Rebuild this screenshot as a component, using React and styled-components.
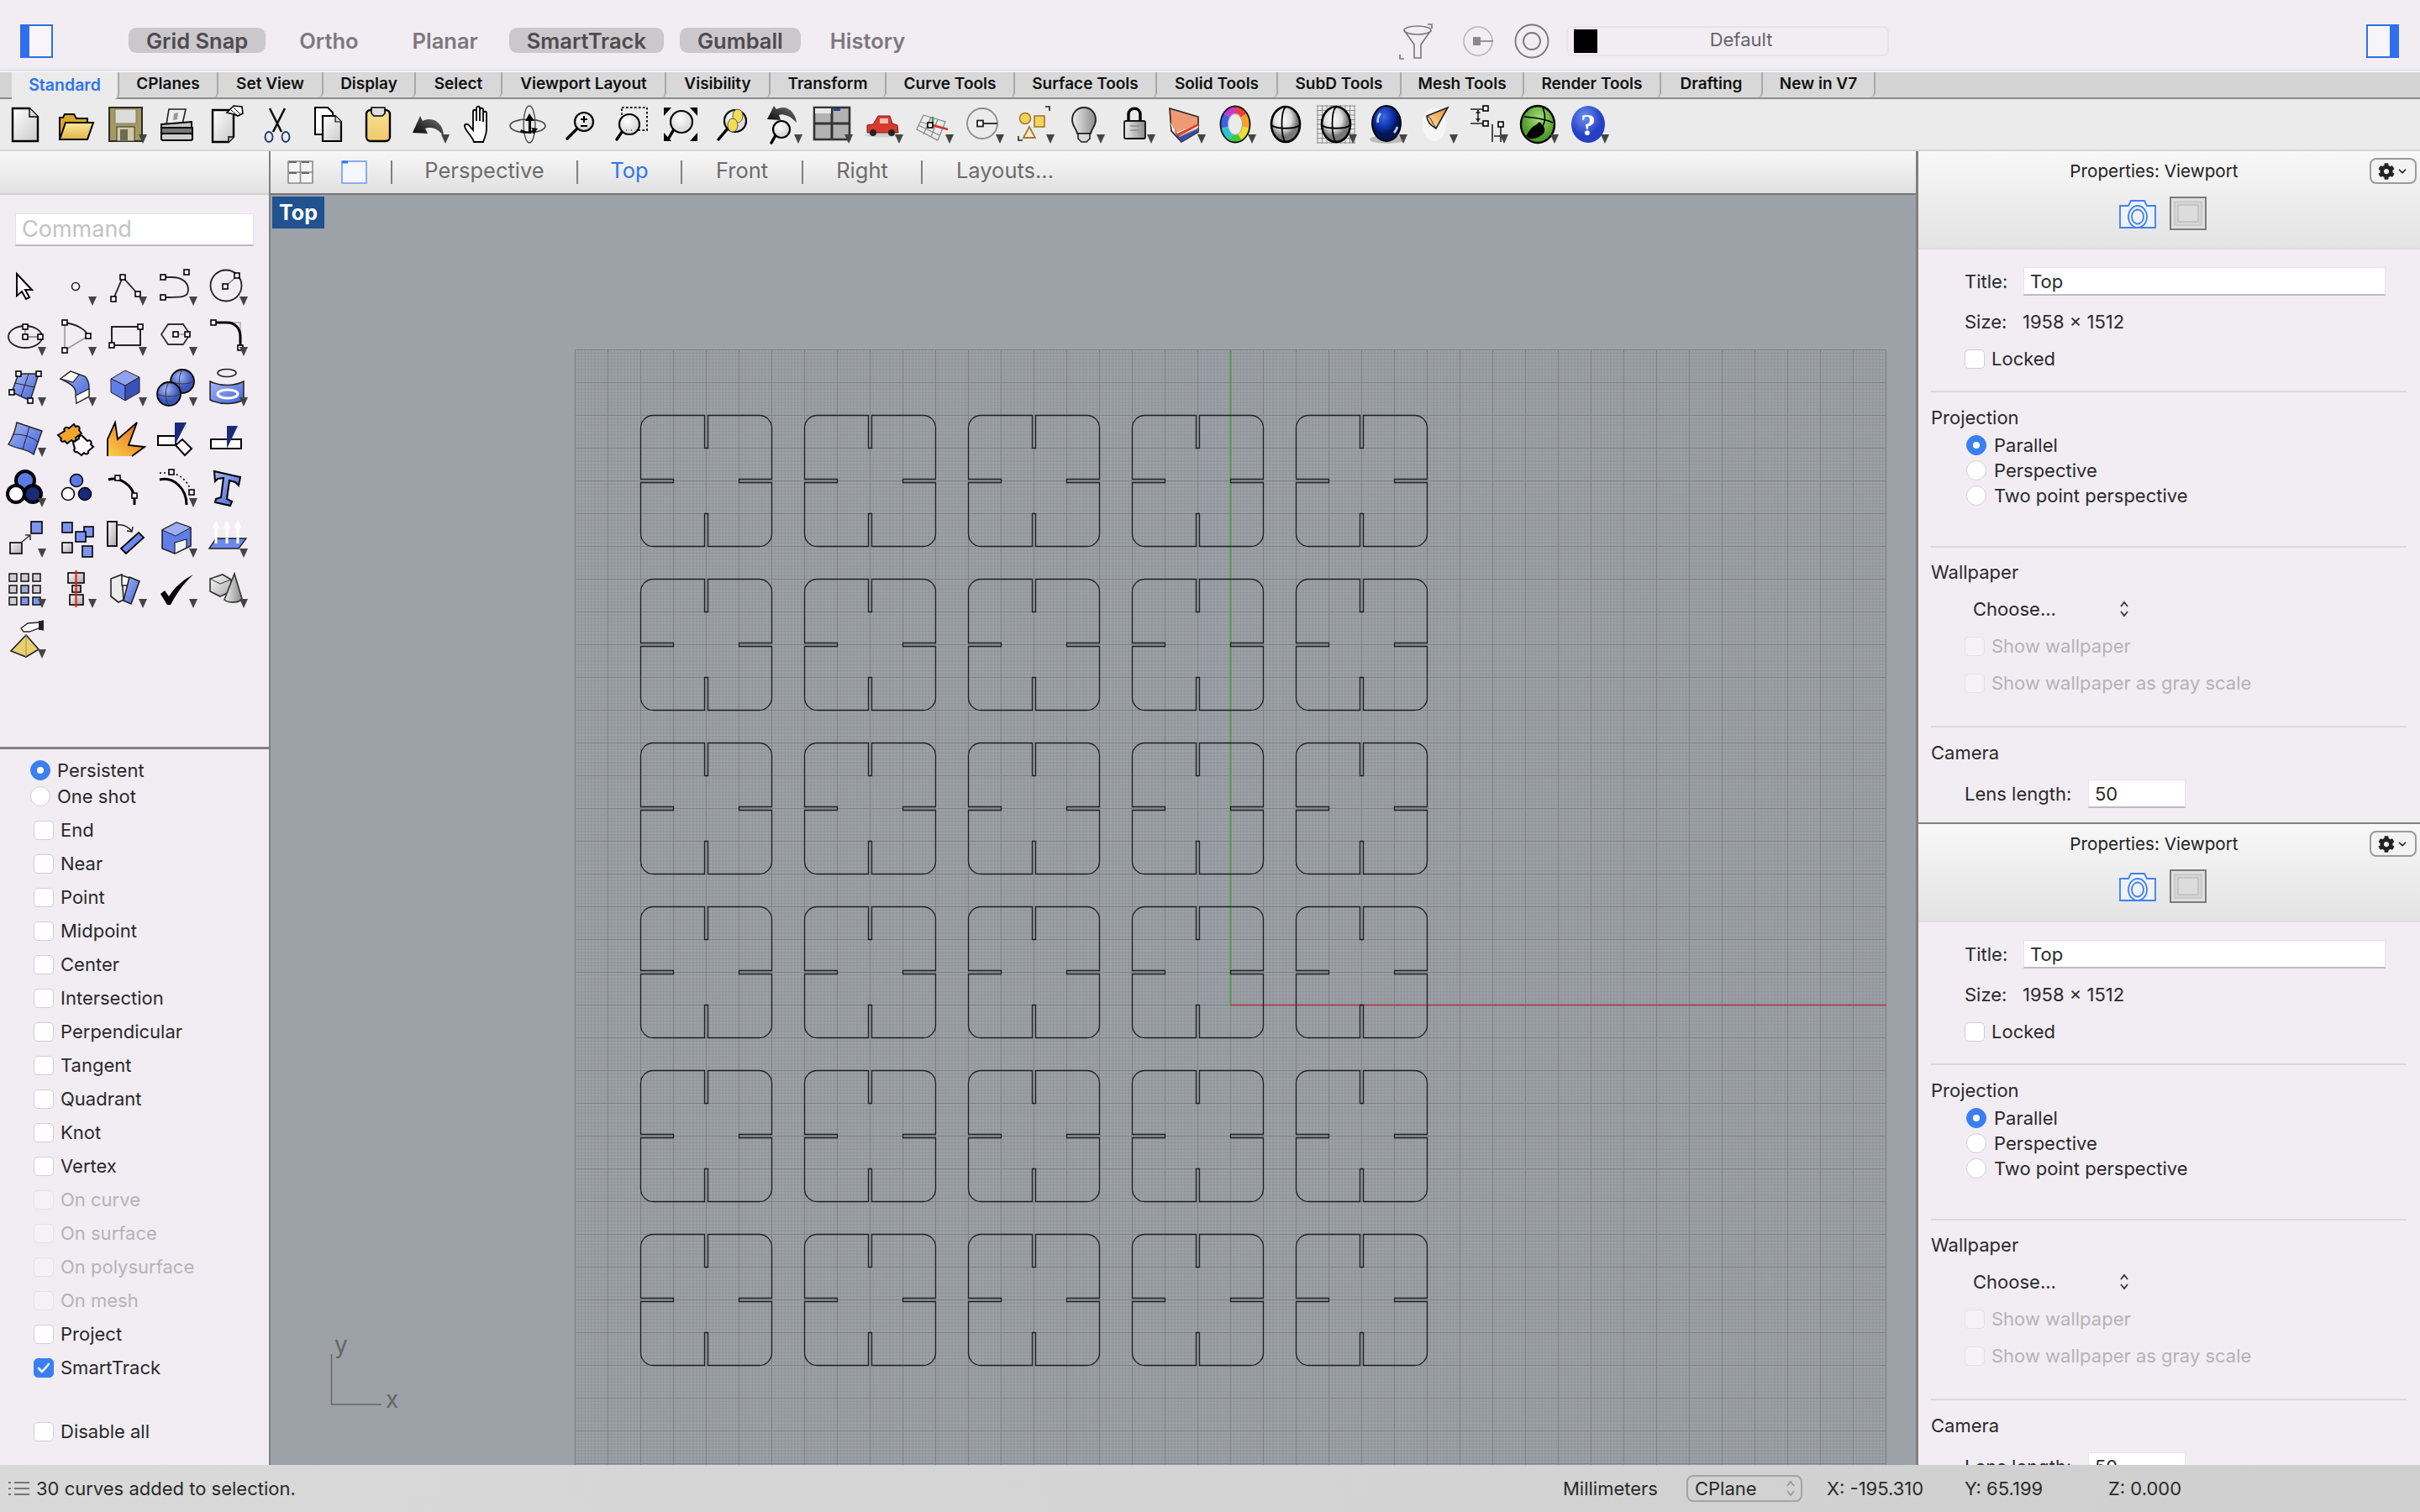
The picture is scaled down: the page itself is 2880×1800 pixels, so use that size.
import React from 'react';
import styled, { createGlobalStyle } from 'styled-components';
import { FaCog } from 'react-icons/fa';
import { ChevronDown } from 'lucide-react';

const GlobalStyle = createGlobalStyle`
  html, body {
    margin: 0;
    padding: 0;
    background: #f1edf3;
  }
  * {
    box-sizing: border-box;
  }
`;

const Page = styled.div`
  width: 2880px;
  height: 1800px;
  display: flex;
  flex-direction: column;
  overflow: hidden;
  background: #f1edf3;
  color: #2a2a2a;
  font-family: Inter, "Liberation Sans", sans-serif;
  font-size: 22px;
`;

/* ---- top bar ---- */
const TopBar = styled.div`
  height: 84px;
  flex: none;
  display: flex;
  align-items: center;
  padding: 0 25px 0 24px;
`;

const PanelToggle = styled.svg`
  width: 39px;
  height: 40px;
  flex: none;
  margin-left: ${p => (p.$right ? 'auto' : '0')};
  margin-top: 13px;
`;

const PillGroup = styled.div`
  width: 1602px;
  flex: none;
  padding-left: 90px;
  display: flex;
  align-items: center;
  gap: 19px;
`;

const Pill = styled.div`
  height: 30px;
  margin-top: 12px;
  margin-left: ${p => p.$shift || 0}px;
  padding: 0 21px;
  border-radius: 9px;
  display: flex;
  align-items: center;
  font-size: 25.5px;
  font-weight: 600;
  color: ${p => (p.$on ? '#4f4b50' : '#7d787e')};
  background: ${p => (p.$on ? '#cbc8cc' : 'transparent')};
`;

const FilterGroup = styled.div`
  display: flex;
  align-items: center;
  margin-top: 13px;
`;

const Glyph = styled.svg`
  flex: none;
  margin-right: ${p => p.$mr || 0}px;
`;

const LayerBox = styled.div`
  width: 384px;
  height: 36px;
  margin-left: 20px;
  padding: 4px 7px;
  display: flex;
  align-items: center;
  border: 2px solid #e8e4ea;
  border-radius: 8px;
`;

const Swatch = styled.div`
  width: 28px;
  height: 28px;
  background: #000;
`;

const LayerName = styled.div`
  flex: 1;
  text-align: center;
  color: #68646a;
  padding-left: 4px;
  padding-bottom: 4px;
`;

/* ---- tabs ---- */
const TabBar = styled.div`
  height: 34px;
  flex: none;
  display: flex;
  padding-left: 14px;
  background: #d4d4d4;
  border-top: 2px solid #f4f2f5;
  border-bottom: 2px solid #8d8d8d;
  box-shadow: 0 -1px 0 #d6d4d7;
`;

const Tab = styled.div`
  width: ${p => p.$w}px;
  height: ${p => (p.$active ? '32px' : '30px')};
  flex: none;
  display: flex;
  align-items: center;
  justify-content: center;
  padding-bottom: 3px;
  font-size: ${p => (p.$active ? '19.5px' : '19px')};
  font-weight: 600;
  color: ${p => (p.$active ? '#2f74ea' : '#111')};
  background: ${p => (p.$active ? '#ebebeb' : '#d8d8d8')};
  border-right: 2px solid #a9a9a9;
  border-bottom-right-radius: 6px;
  position: relative;
  z-index: ${p => (p.$active ? 1 : 0)};
`;

/* ---- toolbars ---- */
const ToolRow = styled.div`
  height: 62px;
  flex: none;
  display: flex;
  background: #ebebeb;
  border-bottom: 2px solid #d8d5db;
`;

const Slot = styled.div`
  width: 60px;
  height: 60px;
  flex: none;
  position: relative;
  display: flex;
  align-items: center;
  justify-content: center;
`;

const ToolSvg = styled.svg`
  width: 48px;
  height: 48px;
`;

const Caret = styled.div`
  position: absolute;
  right: 5px;
  bottom: 7px;
  width: 0;
  height: 0;
  border-left: 5.5px solid transparent;
  border-right: 5.5px solid transparent;
  border-top: 11px solid #444;
`;

/* ---- main area ---- */
const Main = styled.div`
  flex: 1;
  min-height: 0;
  display: flex;
`;

const LeftPanel = styled.div`
  width: 322px;
  flex: none;
  display: flex;
  flex-direction: column;
  border-right: 2px solid #808080;
`;

const LeftHeader = styled.div`
  height: 52px;
  flex: none;
  background: linear-gradient(#f8f8f8, #e2e2e2);
  border-bottom: 2px solid #d0d0d0;
`;

const CommandArea = styled.div`
  height: 660px;
  flex: none;
  padding-top: 22px;
  border-bottom: 3px solid #808080;
`;

const CommandInput = styled.div`
  width: 284px;
  height: 39px;
  margin-left: 18px;
  padding-left: 7px;
  background: #fff;
  border: 1px solid #e6e3e8;
  border-bottom: 2px solid #bdbbbf;
  color: #c3c3c3;
  font-size: 27px;
  line-height: 35px;
`;

const Palette = styled.div`
  display: grid;
  grid-template-columns: repeat(5, 60px);
  grid-auto-rows: 60px;
  margin-top: 18px;
`;

const SnapList = styled.div`
  padding-top: 9px;
  display: flex;
  flex-direction: column;
`;

const RadioGroup = styled.div`
  margin-bottom: 5px;
`;

const RadioRow = styled.div`
  height: 31px;
  display: flex;
  align-items: center;
  gap: 8px;
  padding-left: 36px;
`;

const CheckRow = styled.div`
  height: 40px;
  display: flex;
  align-items: center;
  gap: 8px;
  padding-left: 40px;
  margin-top: ${p => p.$gap || 0}px;
  color: ${p => (p.$off ? '#b6b2b7' : '#2a2a2a')};
`;

const Radio = styled.span`
  width: 24px;
  height: 24px;
  flex: none;
  display: flex;
  align-items: center;
  justify-content: center;
  border-radius: 50%;
  background: ${p => (p.$on ? '#3b7ff0' : '#fff')};
  border: 1px solid ${p => (p.$on ? '#3b7ff0' : '#d4d1d5')};
  &::after {
    content: '';
    width: 8px;
    height: 8px;
    border-radius: 50%;
    background: ${p => (p.$on ? '#fff' : 'transparent')};
  }
`;

const Check = styled.span`
  width: 24px;
  height: 23px;
  flex: none;
  display: flex;
  align-items: center;
  justify-content: center;
  border-radius: 5px;
  background: ${p => (p.$on ? '#3b7ff0' : p.$off ? '#f5f2f6' : '#fff')};
  border: 1px solid ${p => (p.$on ? '#3b7ff0' : p.$off ? '#e5e2e7' : '#d1ced3')};
`;

/* ---- viewport ---- */
const Center = styled.div`
  width: 1958px;
  flex: none;
  display: flex;
  flex-direction: column;
`;

const ViewTabs = styled.div`
  height: 52px;
  flex: none;
  display: flex;
  align-items: center;
  padding-left: 20px;
  background: linear-gradient(#f8f8f8, #e0e0e0);
  border-bottom: 2px solid #767676;
`;

const ViewIcon = styled.svg`
  width: 31px;
  height: 28px;
  flex: none;
  margin-right: ${p => p.$mr}px;
`;

const ViewSep = styled.div`
  width: 2px;
  height: 28px;
  flex: none;
  background: #808080;
`;

const ViewTab = styled.div`
  width: ${p => p.$w}px;
  flex: none;
  text-align: center;
  padding-bottom: 6px;
  font-size: 25.5px;
  color: ${p => (p.$active ? '#2f74ea' : '#6c6c6c')};
`;

const Viewport = styled.div`
  flex: 1;
  min-height: 0;
  position: relative;
  background: #9da1a8;
  overflow: hidden;
`;

const ViewLabel = styled.div`
  position: absolute;
  left: 2px;
  top: 2px;
  width: 62px;
  height: 38px;
  background: #1f528f;
  color: #fff;
  font-size: 25px;
  font-weight: 700;
  display: flex;
  align-items: center;
  justify-content: center;
`;

const Canvas = styled.svg`
  display: block;
  width: 1958px;
  height: 1512px;
`;

/* ---- properties ---- */
const RightColumn = styled.div`
  width: 600px;
  flex: none;
  display: flex;
  flex-direction: column;
  border-left: 3px solid #808080;
  min-height: 0;
`;

const Props = styled.div`
  height: ${p => p.$h}px;
  flex: none;
  overflow: hidden;
  border-bottom: ${p => (p.$line ? '2px solid #808080' : 'none')};
`;

const PropsHeader = styled.div`
  height: 117px;
  position: relative;
  background: linear-gradient(#f8f8f8, #e3e3e3);
  border-bottom: 2px solid #dedbe0;
  display: flex;
  flex-direction: column;
  align-items: center;
  padding-top: 10px;
`;

const PropsTitle = styled.div`
  height: 28px;
  line-height: 28px;
  font-size: 20.7px;
  color: #222;
  margin-right: 36px;
`;

const GearButton = styled.div`
  position: absolute;
  right: 4px;
  top: 8px;
  width: 56px;
  height: 31px;
  border: 2px solid #9a9a9a;
  border-radius: 8px;
  background: #f3f3f3;
  display: flex;
  align-items: center;
  justify-content: center;
  gap: 2px;
  color: #222;
`;

const PropsIcons = styled.div`
  display: flex;
  align-items: center;
  gap: 16px;
  margin-top: 16px;
  margin-right: 16px;
`;

const HeaderIcon = styled.svg`
  width: 44px;
  height: 40px;
`;

const Section = styled.div`
  padding: ${p => p.$top}px 16px ${p => p.$bottom || 0}px 15px;
`;

const Divider = styled.div`
  height: 2px;
  margin: 0 16px 0 15px;
  background: #dcd8de;
`;

const Label = styled.div`
  height: 30px;
  line-height: 30px;
`;

const Row = styled.div`
  height: ${p => p.$h || 34}px;
  margin-top: ${p => p.$mt || 0}px;
  padding-left: ${p => p.$pl ?? 40}px;
  display: flex;
  align-items: center;
  gap: ${p => p.$gap ?? 8}px;
  color: ${p => (p.$off ? '#b6b2b7' : 'inherit')};
`;

const RowLabel = styled.span`
  width: ${p => p.$w}px;
  flex: none;
`;

const TextField = styled.div`
  width: ${p => p.$w}px;
  height: 34px;
  flex: none;
  padding-left: 7px;
  background: #fff;
  border: 1px solid #e6e3e8;
  border-bottom: 2px solid #bdbbbf;
  line-height: 32px;
`;

const ChooseLabel = styled.span`
  width: 174px;
  margin-left: 10px;
  flex: none;
`;

/* ---- status bar ---- */
const StatusBar = styled.div`
  height: 56px;
  flex: none;
  position: relative;
  z-index: 2;
  display: flex;
  align-items: center;
  background: linear-gradient(100deg, #d9d9d9, #cfcfcf);
  padding-left: 10px;
`;

const StatusText = styled.div`
  width: 1850px;
  flex: none;
  display: flex;
  align-items: center;
  gap: 8px;
`;

const StatusCell = styled.div`
  width: ${p => p.$w}px;
  flex: none;
`;

const PlaneSelect = styled.div`
  width: 138px;
  height: 32px;
  margin-right: 29px;
  flex: none;
  padding: 0 6px 0 8px;
  border: 2px solid #a4a4a4;
  border-radius: 8px;
  display: flex;
  align-items: center;
  justify-content: space-between;
`;

/* ---- drawing helpers ---- */
const S = { stroke: '#000', strokeWidth: 2 };

const cp = (x, y, s = 6) => (
  <rect x={x - s / 2} y={y - s / 2} width={s} height={s} fill="#fff" stroke="#000" strokeWidth="1.6" />
);

const mag = (cx, cy, r, x2, y2, inner) => (
  <>
    <path d={`M${cx - r * 0.7} ${cy + r * 0.7}L${x2} ${y2}`} stroke="#000" strokeWidth="3.4" strokeLinecap="round" />
    <circle cx={cx} cy={cy} r={r} fill="url(#glass)" stroke="#000" strokeWidth="2.2" />
    {inner}
  </>
);

const undoArrow = 'M42 38c0-11-7-20-17-20-3 0-6 1-8 2l-3-6-9 20 18 1-3-6c2-1 5-1 7-1 7 1 11 5 15 10z';

const ringColors = ['#f23a3a', '#f9a21f', '#eee02a', '#3ccb3c', '#27c7cf', '#3a62e8', '#c43ad0'];

const ringSegments = ringColors.map((c, i) => {
  const a0 = (i / 7) * Math.PI * 2 - 1.57;
  const a1 = ((i + 1) / 7) * Math.PI * 2 - 1.57;
  const pt = a => `${24 + 13 * Math.cos(a)} ${24 + 17 * Math.sin(a)}`;
  return <path key={c} d={`M${pt(a0)}A13 17 0 0 1 ${pt(a1)}`} fill="none" stroke={c} strokeWidth="8" />;
});

const sphere = (
  <>
    <ellipse cx="24" cy="24" rx="17" ry="21" fill="url(#ball)" stroke="#000" strokeWidth="2.6" />
    <path d="M24 3c-6 6-6 36 0 42M7 25c6 5 28 5 34 0" fill="none" stroke="#000" strokeWidth="1.8" />
  </>
);

const gridLines = [];
for (let i = 0; i < 9; i++) {
  const v = 2 + i * 5.5;
  gridLines.push(<path key={`g${i}`} d={`M${v} 1V47M1 ${v}H47`} stroke="#8b8b8b" strokeWidth="1" />);
}

const topIcons = [
  { art: <><path d="M9 5h20l10 10v29H9z" fill="url(#paper)" stroke="#000" strokeWidth="2.4" /><path d="M29 5v10h10" fill="#d8d8d8" stroke="#000" strokeWidth="1.4" /></> },
  { art: <><path d="M5 41V16h4l2-4h11l3 5h13v6z" fill="#d9a52e" {...S} /><path d="M5 42l7-20h33l-7 20z" fill="url(#gold)" {...S} /></> },
  { caret: 1, art: <><path d="M4 4h39v40H4z" fill="#a39a63" stroke="#2b2b20" strokeWidth="2" /><rect x="11" y="6" width="25" height="17" fill="#dcdcdc" stroke="#807b5d" /><rect x="13" y="27" width="21" height="17" fill="#cfc9a8" stroke="#333" /><rect x="17" y="30" width="9" height="13" fill="#6e6a50" /></> },
  { art: <><path d="M15 6h20l-4 18H12z" fill="#eee" stroke="#222" strokeWidth="1.6" /><path d="M21 11l5-1-1 8-5 1z" fill="#999" /><path d="M6 24l36-3v7H6z" fill="#c6c6c6" {...S} /><rect x="6" y="28" width="37" height="7" fill="#777" {...S} /><rect x="6" y="35" width="37" height="8" rx="2" fill="#cfcfcf" {...S} /></> },
  { art: <><path d="M7 7h25v32l-6 6H7z" fill="url(#paper)" stroke="#000" strokeWidth="2.4" /><path d="M32 39h-6v6" fill="#ccc" stroke="#000" strokeWidth="1.4" /><path d="M24 10l8-8 10 1 1 8-6 3-5-2z" fill="#fff" stroke="#000" strokeWidth="1.6" /><path d="M32 4l8 8M29 7l8 7" stroke="#000" /></> },
  { art: <><path d="M15 5l14 28M33 5L19 33" stroke="#111" strokeWidth="2.6" /><ellipse cx="14" cy="39" rx="4.5" ry="6" fill="none" stroke="#1c2f6e" strokeWidth="1.8" /><ellipse cx="34" cy="39" rx="4.5" ry="6" fill="none" stroke="#1c2f6e" strokeWidth="1.8" /></> },
  { art: <><path d="M9 4h15l6 6v26H9z" fill="#fff" {...S} /><path d="M18 14h15l7 7v23H18z" fill="url(#paper)" stroke="#000" strokeWidth="2.2" /><path d="M33 14v7h7" fill="#ddd" stroke="#000" strokeWidth="1.2" /></> },
  { art: <><rect x="10" y="7" width="28" height="37" rx="5" fill="url(#pale)" stroke="#000" strokeWidth="2.4" /><path d="M16 4h16v7l-3 3H19l-3-3z" fill="#dedede" stroke="#000" strokeWidth="1.6" /></> },
  { caret: 1, art: <path d={undoArrow} fill="url(#dark)" /> },
  { art: <path d="M18 45c-2-7-11-14-11-19 0-3 4-3 6 0l4 5V9c0-3 4-3 4 0v11V5c0-3 4-3 4 0v15V7c0-3 4-3 4 0v14V11c0-3 4-3 4 0v19c0 6-2 9-4 15z" fill="#fff" stroke="#000" strokeWidth="1.8" /> },
  { art: <><ellipse cx="24" cy="24" rx="7" ry="22" fill="none" stroke="#444" strokeWidth="1.3" /><ellipse cx="22" cy="26" rx="21" ry="8" fill="none" stroke="#444" strokeWidth="1.6" /><path d="M24 11l-5 9h4v15h3V20h4z" fill="#000" /><path d="M14 30c5 3 10 3 14 1l-2-3 8 1-5 7-1-3c-5 2-10 2-15 0z" fill="#000" /></> },
  { art: mag(29, 21, 11, 9, 41, <path d="M25 18h8M29 14v8M25 26h8" stroke="#000" strokeWidth="2" />) },
  { art: <><rect x="14" y="4" width="30" height="27" fill="none" stroke="#000" strokeWidth="1.8" strokeDasharray="2.5 2.5" />{mag(23, 24, 12, 8, 42)}<path d="M19 31h1M25 31h1" stroke="#000" /></> },
  { art: <><path d="M4 4h9L4 14zM44 4h-9l9 10zM4 44h9L4 34zM44 44h-9l9-10z" fill="#000" />{mag(25, 21, 13, 9, 42)}</> },
  { art: <>{mag(29, 20, 13, 9, 42)}<ellipse cx="32" cy="14" rx="6" ry="8" fill="#f3dd55" stroke="#555" /><ellipse cx="26" cy="25" rx="6" ry="8" fill="#f3dd55" stroke="#555" /></> },
  { caret: 1, art: <><path d="M42 22c-1-10-8-18-16-18-3 0-6 1-8 2l-3-4-8 16 16 1-2-6c2-1 5-1 7 0 6 1 9 4 14 9z" fill="url(#dark)" />{mag(24, 30, 10, 12, 46)}</> },
  { caret: 1, art: <><rect x="3" y="4" width="42" height="38" fill="#b2b2b2" stroke="#333" strokeWidth="2.6" /><path d="M24 4v38M3 23h42" stroke="#333" strokeWidth="3" /><rect x="4" y="5" width="19" height="6" fill="#e8e8e8" /><rect x="26" y="5" width="8" height="3" fill="#2d3f9c" /></> },
  { caret: 1, art: <><ellipse cx="24" cy="37" rx="20" ry="2.5" fill="#cfcfcf" /><path d="M6 25l7-1 6-10h14l3 9 6 2 1 9H6z" fill="#d93a2e" stroke="#7a1b14" /><rect x="21" y="17" width="10" height="6" fill="#f5c0b5" /><circle cx="13" cy="34" r="4" fill="#222" /><circle cx="35" cy="34" r="4" fill="#222" /></> },
  { caret: 1, art: <><path d="M13 13l26 8-9 22-25-13zM22 15L13 36M30 18l-8 21M9 21l26 8M7 25l25 12" fill="none" stroke="#8a8a8a" strokeWidth="1.3" /><path d="M24 25V15" stroke="#35a043" strokeWidth="2.5" /><path d="M24 25l18 5" stroke="#d0352b" strokeWidth="2.5" /><rect x="18" y="22" width="6" height="6" fill="#fff" stroke="#000" strokeWidth="1.6" /></> },
  { caret: 1, art: <><circle cx="23" cy="23" r="18" fill="none" stroke="#8c8c8c" strokeWidth="1.8" /><path d="M23 23h18" stroke="#222" strokeWidth="1.8" /><rect x="17" y="19.5" width="7" height="7" fill="#fff" stroke="#222" strokeWidth="1.8" /></> },
  { caret: 1, art: <><path d="M38 3h5v5M6 38v5h5" fill="none" stroke="#222" strokeWidth="1.6" /><circle cx="14" cy="17" r="6.5" fill="#f3d35b" stroke="#a9772a" strokeWidth="1.6" /><rect x="25" y="14" width="12" height="13" fill="#f3d35b" stroke="#a9772a" strokeWidth="1.6" /><path d="M19 27l7 13H12z" fill="#f4ead0" stroke="#a9772a" strokeWidth="1.8" /></> },
  { caret: 1, art: <><path d="M24 4c8 0 14 6 14 15 0 7-5 10-6 16H16c-1-6-6-9-6-16 0-9 6-15 14-15z" fill="url(#bulb)" stroke="#222" strokeWidth="1.8" /><path d="M17 35h14v6l-4 4h-6l-4-4z" fill="#d9d9d9" stroke="#222" strokeWidth="1.6" /></> },
  { caret: 1, art: <><path d="M17 20V12c0-9 14-9 14 0v8" fill="none" stroke="#000" strokeWidth="3.4" /><rect x="12" y="20" width="25" height="21" rx="2" fill="url(#bulb)" stroke="#111" strokeWidth="1.8" /><path d="M19 26h11M19 31h11" stroke="#8c8c8c" strokeWidth="1.6" /></> },
  { caret: 1, art: <><path d="M6 5l34 10v18L20 45 8 32z" fill="#ee9a74" stroke="#222" strokeWidth="1.6" /><path d="M7 21l6 13 27-10v4L16 38 9 31z" fill="#fff" /><path d="M12 29l3 6 25-12v3L15 39z" fill="#d8442c" /><path d="M11 32l9 13 20-12v-4L18 39z" fill="#3450a8" /></> },
  { caret: 1, art: <><g>{ringSegments}</g><ellipse cx="24" cy="24" rx="17.5" ry="21.5" fill="none" stroke="#111" strokeWidth="1.8" /><ellipse cx="24" cy="24" rx="8.5" ry="12.5" fill="none" stroke="#888" strokeWidth="0.8" /></> },
  { art: sphere },
  { caret: 1, art: <><g>{gridLines}</g>{sphere}</> },
  { caret: 1, art: <><ellipse cx="25" cy="42" rx="21" ry="5" fill="#bbb" /><ellipse cx="24" cy="23" rx="17" ry="21" fill="url(#blueBall)" stroke="#000" strokeWidth="1.8" /><path d="M17 11c-3 3-4 8-3 11M33 34c2-2 3-4 4-7" fill="none" stroke="#bcd2ff" strokeWidth="2.6" /></> },
  { caret: 1, art: <><ellipse cx="21" cy="24" rx="14" ry="20" fill="#f6f6f6" /><path d="M37 4L12 14c0 5 4 11 11 15z" fill="url(#cone)" stroke="#222" strokeWidth="1.6" /><path d="M13 15c4-1 5 9 11 14" fill="none" stroke="#222" /></> },
  { caret: 1, art: <><path d="M4 6h16M4 23h16M13 7v14M30 24v21M40 24v21M32 38h7" stroke="#222" strokeWidth="1.6" fill="none" />{cp(22, 5)}{cp(22, 23)}{cp(40, 24)}<path d="M10 11l3-4 3 4zM10 17l3 4 3-4z" fill="#222" /></> },
  { caret: 1, art: <><ellipse cx="24" cy="24" rx="20" ry="22" fill="url(#greenBall)" stroke="#000" strokeWidth="2.4" /><path d="M10 38c5-7 5-10 13-14 3-4 5-3 6 1 4 2 4 7 2 10-7 6-15 9-21 3z" fill="#000" /><path d="M30 4c4 10 3 18-1 24M8 15c10 1 22 1 34 7" fill="none" stroke="#000" strokeWidth="1.6" /></> },
  { caret: 1, art: <><ellipse cx="24" cy="24" rx="20" ry="22" fill="url(#helpBall)" /><text x="24" y="37" textAnchor="middle" fontFamily="Liberation Serif, serif" fontWeight="700" fontSize="36" fill="#fff">?</text></> },
];

const leftIcons = [
  { art: <path d="M14 9l18 19h-8l5 9-4 2-5-9-6 5z" fill="#fff" stroke="#000" strokeWidth="2" /> },
  { caret: 1, art: <circle cx="24" cy="24" r="4.5" fill="#fff" stroke="#222" strokeWidth="1.6" /> },
  { caret: 1, art: <><path d="M9 39l11-26 18 20" fill="none" stroke="#222" strokeWidth="1.8" />{cp(9, 39)}{cp(20, 13)}{cp(38, 33)}</> },
  { caret: 1, art: <><path d="M8 13h10c14 0 20 7 20 15 0 10-10 9-30 9" fill="none" stroke="#222" strokeWidth="1.8" />{cp(8, 13)}{cp(8, 37)}{cp(36, 7)}</> },
  { caret: 1, art: <><circle cx="23" cy="23" r="18.5" fill="none" stroke="#222" strokeWidth="1.8" /><path d="M22 24l14-12" stroke="#777" strokeWidth="1.4" />{cp(22, 24)}{cp(36, 11)}</> },
  { caret: 1, art: <><ellipse cx="24" cy="24" rx="20" ry="13" fill="none" stroke="#222" strokeWidth="1.8" /><path d="M24 24h18M24 12v12" stroke="#777" strokeWidth="1.4" />{cp(24, 12)}{cp(24, 24)}{cp(42, 24)}</> },
  { caret: 1, art: <><path d="M11 7v33l28-17" fill="none" stroke="#999" strokeWidth="1.6" /><path d="M11 7c14 2 25 8 28 16" fill="none" stroke="#222" strokeWidth="1.8" />{cp(11, 7)}{cp(39, 23)}{cp(11, 40)}</> },
  { caret: 1, art: <><rect x="7" y="12" width="34" height="22" fill="none" stroke="#222" strokeWidth="2" />{cp(7, 34)}{cp(41, 12)}</> },
  { caret: 1, art: <><path d="M6 21l8-12h18l8 12-8 12H14z" fill="none" stroke="#333" strokeWidth="1.8" /><path d="M23 21h15" stroke="#777" />{cp(23, 21)}{cp(37, 21)}</> },
  { caret: 1, art: <><path d="M8 7h32v30" fill="none" stroke="#aaa" strokeWidth="1.4" /><path d="M8 7h16c10 0 16 7 16 17v13" fill="none" stroke="#000" strokeWidth="3" />{cp(8, 7)}{cp(40, 37)}</> },
  { caret: 1, art: <><path d="M16 8l24 0-10 32-22-10z" fill="url(#blue)" stroke="#222" strokeWidth="1.4" /><path d="M28 8l-9 27M12 19l23 5" stroke="#222" strokeWidth="1" />{cp(16, 8)}{cp(40, 8)}{cp(30, 40)}{cp(8, 30)}</> },
  { caret: 1, art: <><path d="M6 14L18 5l17 6c4 4 5 8 5 13v11L25 43l-1-12c0-7-5-11-18-17z" fill="url(#blue)" stroke="#222" strokeWidth="1.4" /><path d="M6 14L18 5l10 4-7 9z" fill="#fff" stroke="#222" strokeWidth="1.2" /><path d="M40 26v9L25 43l-1-9z" fill="#fff" stroke="#222" strokeWidth="1.2" /></> },
  { caret: 1, art: <><path d="M6 14L23 4l17 8-17 10z" fill="#8fa3f0" stroke="#222" /><path d="M6 14l17 8v18L6 30z" fill="#5f7ee8" stroke="#222" /><path d="M23 22l17-10v18L23 40z" fill="#3a51b8" stroke="#222" /></> },
  { caret: 1, art: <><circle cx="31" cy="17" r="14" fill="url(#blueSoft)" stroke="#000" strokeWidth="1.8" /><path d="M31 3c-5 8-5 20 0 28M17 17c8 4 20 4 28 0" fill="none" stroke="#334" /><circle cx="15" cy="32" r="14" fill="url(#blueSoft)" stroke="#000" strokeWidth="1.8" /><path d="M15 18c-5 8-5 20 0 28M1 32c8 4 20 4 28 0" fill="none" stroke="#334" /></> },
  { caret: 1, art: <><ellipse cx="24" cy="7" rx="11" ry="4.5" fill="none" stroke="#222" strokeWidth="1.6" /><path d="M4 17c12 6 28 6 40 0v22c-12 6-28 6-40 0z" fill="url(#blue)" stroke="#222" strokeWidth="1.5" /><ellipse cx="25" cy="32" rx="12" ry="5" fill="none" stroke="#fff" strokeWidth="3" /></> },
  { caret: 1, art: <><path d="M14 6l30 10-10 28C24 36 14 38 4 32c5-8 8-16 10-26z" fill="url(#blue)" stroke="#222" strokeWidth="1.4" /><path d="M29 11l-8 27M9 20c10 0 20 1 30 9" fill="none" stroke="#223" strokeWidth="1" /></> },
  { art: <><path d="M3 21l8-5c-2-3 2-6 5-3l6-5 2 3c3-2 6 1 4 4l3 4-7 5c2 3-2 6-5 3l-5 4-3-3c-3 2-6-1-4-3z" fill="#f2a52c" stroke="#000" strokeWidth="2" /><path d="M21 30l7-5c-1-3 3-5 5-2l5 5c3-2 6 1 4 4l3 3-6 5c1 3-3 5-5 2l-3 3-5-4c-3 1-5-2-3-4z" fill="#fff" stroke="#000" strokeWidth="2" /></> },
  { art: <><path d="M2 46V26L11 6l3 20L37 6 27 33l19 2-15 11z" fill="url(#burst)" /><path d="M2 46V26L11 6l3 20L37 6 27 33l19 2-15 11" fill="none" stroke="#000" strokeWidth="1.8" /></> },
  { art: <><rect x="2" y="22" width="21" height="11" fill="#fff" stroke="#000" strokeWidth="2" /><path d="M23 33l8-7 11 11-8 8z" fill="#fff" stroke="#000" strokeWidth="2" /><path d="M22 6h14L22 33z" fill="#1a2a7a" /></> },
  { art: <><rect x="5" y="26" width="36" height="11" fill="#fff" stroke="#000" strokeWidth="2" /><path d="M24 10h13L24 37z" fill="#1a2a7a" /></> },
  { caret: 1, art: <><circle cx="24" cy="15" r="11" fill="#5b7be6" stroke="#000" strokeWidth="4" /><circle cx="13" cy="31" r="10" fill="#fff" stroke="#000" strokeWidth="4" /><circle cx="33" cy="31" r="10" fill="#1a2a7a" stroke="#000" strokeWidth="4" /></> },
  { art: <><circle cx="25" cy="15" r="7.5" fill="#5b7be6" stroke="#000" strokeWidth="1.6" /><circle cx="15" cy="31" r="7.5" fill="#fff" stroke="#000" strokeWidth="1.6" /><circle cx="35" cy="31" r="7.5" fill="#1a2a7a" stroke="#000" strokeWidth="1.6" /></> },
  { art: <><path d="M3 14c12-4 31 6 31 24v6" fill="none" stroke="#000" strokeWidth="3" />{cp(14, 12)}{cp(34, 33)}</> },
  { caret: 1, art: <><path d="M4 14c16-4 32 10 32 30" fill="none" stroke="#000" strokeWidth="3" /><path d="M4 6h14c12 2 20 12 24 22" fill="none" stroke="#000" strokeWidth="1.6" strokeDasharray="2 3" />{cp(18, 5)}{cp(42, 29)}</> },
  { art: <path d="M9 4l31 7-2 10-4-4-7-2-3 22 6 3-2 5-18-4 1-4 6-2 3-23-7 1-3 3z" fill="url(#blue)" stroke="#000" strokeWidth="2" /> },
  { caret: 1, art: <><rect x="6" y="29" width="14" height="13" fill="url(#gray)" stroke="#000" strokeWidth="1.6" /><rect x="31" y="4" width="13" height="14" fill="#7d95f0" stroke="#000" strokeWidth="1.6" /><path d="M19 29l11-9M24 20h6v6" fill="none" stroke="#333" strokeWidth="1.6" /></> },
  { art: <><rect x="8" y="5" width="12" height="12" fill="#7d95f0" stroke="#000" strokeWidth="1.6" /><rect x="34" y="10" width="11" height="12" fill="#7d95f0" stroke="#000" strokeWidth="1.6" /><rect x="24" y="16" width="12" height="12" fill="#7d95f0" stroke="#000" strokeWidth="1.6" /><rect x="8" y="29" width="12" height="12" fill="url(#gray)" stroke="#000" strokeWidth="1.6" /><rect x="32" y="33" width="12" height="13" fill="#7d95f0" stroke="#000" strokeWidth="1.6" /></> },
  { art: <><rect x="2" y="4" width="11" height="29" fill="url(#gray)" stroke="#000" strokeWidth="1.8" /><path d="M13 8c8-1 14 2 18 8M25 15l6 1 1-6" fill="none" stroke="#222" strokeWidth="1.5" /><path d="M18 36l21-19 6 6-21 19z" fill="#6f88ee" stroke="#000" strokeWidth="1.8" /></> },
  { caret: 1, art: <><path d="M7 14L24 5l17 6v22l-19 9-15-6z" fill="#5f7ee8" stroke="#222" strokeWidth="1.6" /><path d="M7 14l16 7 18-10-17-6z" fill="#9db0f5" stroke="#222" /><path d="M22 29l14-4v10l-14 7z" fill="#f0f0f0" stroke="#222" strokeWidth="1.2" /></> },
  { caret: 1, art: <><path d="M3 36l8-12h36l-9 12z" fill="#6f88ee" stroke="#222" strokeWidth="1.4" /><path d="M11 30V8M8 12l3-6 3 6M24 30V8M21 12l3-6 3 6M37 30V8M34 12l3-6 3 6" fill="none" stroke="#fff" strokeWidth="3" /></> },
  { caret: 1, art: <>{[0, 1, 2].map(r => [0, 1, 2].map(c => <rect key={`${r}${c}`} x={5 + c * 14} y={6 + r * 14} width="9" height="9" fill={r === 2 && c > 0 ? '#7d95f0' : r === 1 && c === 1 ? '#9aa8d8' : '#cfcfd2'} stroke="#111" strokeWidth="1.5" />))}</> },
  { caret: 1, art: <><rect x="15" y="5" width="19" height="12" fill="url(#gray)" stroke="#000" strokeWidth="1.6" /><rect x="20" y="20" width="10" height="8" fill="url(#gray)" stroke="#000" strokeWidth="1.6" /><rect x="17" y="31" width="16" height="12" fill="url(#gray)" stroke="#000" strokeWidth="1.6" /><path d="M24.5 2v44" stroke="#d2241c" strokeWidth="3" opacity=".75" /></> },
  { caret: 1, art: <><path d="M6 12l13-5 2 30-6 3-9-7z" fill="#ececec" stroke="#222" strokeWidth="1.6" /><path d="M19 8l12 4-4 8-8 0z" fill="#fafafa" stroke="#222" strokeWidth="1.4" /><path d="M28 10l12 5-10 27-9-4z" fill="url(#blue)" stroke="#222" strokeWidth="1.6" /></> },
  { caret: 1, art: <path d="M5 30l5-4 5 7c7-11 17-20 29-26-12 11-20 23-27 36h-4z" fill="#000" /> },
  { caret: 1, art: <><path d="M4 12l15-5 10 6v14l-13 6-12-6z" fill="url(#gray)" stroke="#333" strokeWidth="1.6" /><path d="M4 12l12 6 13-5" fill="none" stroke="#333" /><path d="M33 6l9 30c-3 5-17 5-21 1z" fill="url(#bulb)" stroke="#333" strokeWidth="1.6" /></> },
  { caret: 1, art: <><path d="M25 19L7 38l18 7 15-9z" fill="#e9cf72" stroke="#222" strokeWidth="1.6" /><path d="M25 19v26" stroke="#a88f3c" /><path d="M19 11l8-6 13-1 5-2v11l-5-2-11 4-7 0z" fill="#fff" stroke="#222" strokeWidth="1.3" /><rect x="40" y="2" width="6" height="11" fill="#222" /></> },
];

/* the grid and the thirty test curves on the Top view */
const GX = 362.5;
const GY = 184.5;
const CELL = 39;
const GW = 40 * CELL;
const GH = 1512 - GY;

const minorPath = () => {
  let d = '';
  for (let i = 0; i <= 400; i++) d += `M${GX + i * 3.9} ${GY}V${GY + GH}`;
  for (let i = 0; i * 3.9 <= GH; i++) d += `M${GX} ${GY + i * 3.9}H${GX + GW}`;
  return d;
};

const majorPath = () => {
  let d = '';
  for (let i = 0; i <= 40; i++) d += `M${GX + i * CELL} ${GY}V${GY + GH}`;
  for (let i = 0; i * CELL <= GH; i++) d += `M${GX} ${GY + i * CELL}H${GX + GW}`;
  return d;
};

const panelShape = 'M15 0H76V39H80V0H141A15 15 0 0 1 156 15V76H117V80H156V141A15 15 0 0 1 141 156H80V117H76V156H15A15 15 0 0 1 0 141V80H39V76H0V15A15 15 0 0 1 15 0Z';

const shapes = [];
for (let r = 0; r < 6; r++) {
  for (let c = 0; c < 5; c++) {
    shapes.push({ x: GX + 2 * CELL + c * 195, y: GY + 2 * CELL + r * 195 });
  }
}

const SharedDefs = styled.svg`
  position: absolute;
  width: 0;
  height: 0;
`;

const Gradients = () => (
  <SharedDefs>
    <defs>
      <linearGradient id="paper" x1="0" x2="1" y1="0" y2="1"><stop offset="0" stopColor="#fff" /><stop offset="1" stopColor="#c9c9c9" /></linearGradient>
      <linearGradient id="gold" x1="0" x2="0" y1="0" y2="1"><stop offset="0" stopColor="#fbe89a" /><stop offset="1" stopColor="#e3b54a" /></linearGradient>
      <linearGradient id="pale" x1="0" x2="0" y1="0" y2="1"><stop offset="0" stopColor="#f6df92" /><stop offset="1" stopColor="#f0c96c" /></linearGradient>
      <linearGradient id="dark" x1="0" x2="1" y1="1" y2="0"><stop offset="0" stopColor="#000" /><stop offset="1" stopColor="#777" /></linearGradient>
      <linearGradient id="gray" x1="0" x2="1" y1="0" y2="1"><stop offset="0" stopColor="#fafafa" /><stop offset="1" stopColor="#aaa" /></linearGradient>
      <linearGradient id="bulb" x1="0" x2="1" y1="0" y2="0"><stop offset="0" stopColor="#eee" /><stop offset="1" stopColor="#8a8a8a" /></linearGradient>
      <linearGradient id="blue" x1="0" x2="1" y1="0" y2="1"><stop offset="0" stopColor="#a8b8f5" /><stop offset="1" stopColor="#3f5fd8" /></linearGradient>
      <linearGradient id="cone" x1="1" x2="0" y1="0" y2="1"><stop offset="0" stopColor="#e8892c" /><stop offset="1" stopColor="#fbe5b0" /></linearGradient>
      <linearGradient id="burst" x1="0" x2="1" y1="1" y2="0"><stop offset="0" stopColor="#fbd24a" /><stop offset="1" stopColor="#e85f1a" /></linearGradient>
      <radialGradient id="glass" cx=".4" cy=".35"><stop offset="0" stopColor="#fff" /><stop offset="1" stopColor="#dcdcdc" /></radialGradient>
      <radialGradient id="ball" cx=".4" cy=".35"><stop offset="0" stopColor="#fff" /><stop offset=".6" stopColor="#ddd" /><stop offset="1" stopColor="#777" /></radialGradient>
      <radialGradient id="blueBall" cx=".4" cy=".3"><stop offset="0" stopColor="#3c6be8" /><stop offset=".7" stopColor="#0b2ba0" /><stop offset="1" stopColor="#041457" /></radialGradient>
      <radialGradient id="blueSoft" cx=".4" cy=".3"><stop offset="0" stopColor="#a9b9f2" /><stop offset="1" stopColor="#3b55b8" /></radialGradient>
      <radialGradient id="greenBall" cx=".55" cy=".35"><stop offset="0" stopColor="#a9e07a" /><stop offset="1" stopColor="#4f9c2c" /></radialGradient>
      <radialGradient id="helpBall" cx=".4" cy=".3"><stop offset="0" stopColor="#6f8ff0" /><stop offset="1" stopColor="#2340c6" /></radialGradient>
    </defs>
  </SharedDefs>
);

const Tool = ({ art, caret }) => (
  <Slot>
    <ToolSvg viewBox="0 0 48 48">{art}</ToolSvg>
    {caret ? <Caret /> : null}
  </Slot>
);

const Tick = () => (
  <svg width="16" height="13" viewBox="0 0 16 13">
    <path d="M2 7l4 4 8-9" fill="none" stroke="#fff" strokeWidth="2.6" strokeLinecap="round" strokeLinejoin="round" />
  </svg>
);

const UpDown = ({ color = '#333' }) => (
  <svg width="12" height="22" viewBox="0 0 12 22">
    <path d="M2 8l4-5 4 5M2 14l4 5 4-5" fill="none" stroke={color} strokeWidth="1.8" />
  </svg>
);

const tabs = [
  ['Standard', 128], ['CPlanes', 118], ['Set View', 125], ['Display', 110], ['Select', 103],
  ['Viewport Layout', 195], ['Visibility', 124], ['Transform', 138], ['Curve Tools', 153],
  ['Surface Tools', 169], ['Solid Tools', 144], ['SubD Tools', 147], ['Mesh Tools', 146],
  ['Render Tools', 163], ['Drafting', 121], ['New in V7', 134],
];

const snaps = [
  ['End'], ['Near'], ['Point'], ['Midpoint'], ['Center'], ['Intersection'], ['Perpendicular'],
  ['Tangent'], ['Quadrant'], ['Knot'], ['Vertex'], ['On curve', 'off'], ['On surface', 'off'],
  ['On polysurface', 'off'], ['On mesh', 'off'], ['Project'], ['SmartTrack', 'on'],
];

const Properties = ({ h, line }) => (
  <Props $h={h} $line={line}>
    <PropsHeader>
      <PropsTitle>Properties: Viewport</PropsTitle>
      <GearButton>
        <FaCog size={20} />
        <ChevronDown size={14} strokeWidth={3} />
      </GearButton>
      <PropsIcons>
        <HeaderIcon viewBox="0 0 44 40">
          <path d="M1 11h10l3-6h16l3 6h10v26H1z" fill="#eef2fb" stroke="#3f80f0" strokeWidth="1.8" />
          <ellipse cx="22" cy="24" rx="11" ry="13" fill="none" stroke="#3f80f0" strokeWidth="1.8" />
          <ellipse cx="22" cy="24" rx="7" ry="8.5" fill="none" stroke="#3f80f0" strokeWidth="1.8" />
        </HeaderIcon>
        <HeaderIcon viewBox="0 0 44 40">
          <rect x="1" y="1" width="42" height="38" fill="#dedede" stroke="#7c7c7c" strokeWidth="2" />
          <rect x="6" y="6" width="32" height="28" fill="#d6d6d6" stroke="#bcbcbc" />
          <rect x="10" y="10" width="24" height="20" fill="#dcdcdc" stroke="#b2b2b2" />
        </HeaderIcon>
      </PropsIcons>
    </PropsHeader>

    <Section $top={21} $bottom={21}>
      <Row $pl={40} $gap={0}>
        <RowLabel $w={70}>Title:</RowLabel>
        <TextField $w={431}>Top</TextField>
      </Row>
      <Row $mt={14} $gap={0}>
        <RowLabel $w={69}>Size:</RowLabel>
        <span>1958 x 1512</span>
      </Row>
      <Row $mt={10}>
        <Check />
        <span>Locked</span>
      </Row>
    </Section>
    <Divider />

    <Section $top={15} $bottom={45}>
      <Label>Projection</Label>
      <Row $h={30} $mt={3} $pl={42} $gap={9}><Radio $on /><span>Parallel</span></Row>
      <Row $h={30} $pl={42} $gap={9}><Radio /><span>Perspective</span></Row>
      <Row $h={30} $pl={42} $gap={9}><Radio /><span>Two point perspective</span></Row>
    </Section>
    <Divider />

    <Section $top={14} $bottom={36}>
      <Label>Wallpaper</Label>
      <Row $h={30} $mt={14} $gap={0}>
        <ChooseLabel>Choose...</ChooseLabel>
        <UpDown />
      </Row>
      <Row $h={30} $mt={14} $off><Check $off /><span>Show wallpaper</span></Row>
      <Row $h={30} $mt={14} $off><Check $off /><span>Show wallpaper as gray scale</span></Row>
    </Section>
    <Divider />

    <Section $top={15}>
      <Label>Camera</Label>
      <Row $mt={17} $gap={0}>
        <RowLabel $w={147}>Lens length:</RowLabel>
        <TextField $w={116}>50</TextField>
      </Row>
    </Section>
  </Props>
);

export default function App() {
  return (
    <Page>
      <GlobalStyle />
      <Gradients />

      <TopBar>
        <PanelToggle viewBox="0 0 39 40">
          <rect x="1" y="1" width="37" height="38" fill="#f7f5f8" stroke="#2f6fed" strokeWidth="2" />
          <rect x="0" y="0" width="11" height="40" fill="#2f6fed" />
        </PanelToggle>
        <PillGroup>
          <Pill $on>Grid Snap</Pill>
          <Pill>Ortho</Pill>
          <Pill $shift={3}>Planar</Pill>
          <Pill $on $shift={-3}>SmartTrack</Pill>
          <Pill $on>Gumball</Pill>
          <Pill $shift={-5}>History</Pill>
        </PillGroup>
        <FilterGroup>
          <Glyph width="44" height="44" viewBox="0 0 44 44" $mr={32}>
            <ellipse cx="22" cy="9" rx="16" ry="5" fill="none" stroke="#777" strokeWidth="1.6" />
            <path d="M6 9l12 17v16h8V26L38 9M34 2h5v5M1 38v5h5" fill="none" stroke="#777" strokeWidth="1.6" />
          </Glyph>
          <Glyph width="36" height="36" viewBox="0 0 36 36" $mr={25}>
            <circle cx="18" cy="18" r="17" fill="none" stroke="#b9b6ba" strokeWidth="1.6" />
            <rect x="12" y="13" width="9" height="10" fill="#8a8a8a" />
            <path d="M20 18h16" stroke="#8a8a8a" strokeWidth="1.8" />
          </Glyph>
          <Glyph width="42" height="42" viewBox="0 0 42 42">
            <circle cx="21" cy="21" r="19.5" fill="none" stroke="#777" strokeWidth="1.8" />
            <circle cx="21" cy="21" r="10" fill="none" stroke="#777" strokeWidth="1.8" />
          </Glyph>
          <LayerBox>
            <Swatch />
            <LayerName>Default</LayerName>
          </LayerBox>
        </FilterGroup>
        <PanelToggle viewBox="0 0 39 40" $right>
          <rect x="1" y="1" width="37" height="38" fill="#f7f5f8" stroke="#2f6fed" strokeWidth="2" />
          <rect x="28" y="0" width="11" height="40" fill="#2f6fed" />
        </PanelToggle>
      </TopBar>

      <TabBar>
        {tabs.map(([name, w], i) => (
          <Tab key={name} $w={w} $active={i === 0}>{name}</Tab>
        ))}
      </TabBar>

      <ToolRow>
        {topIcons.map((t, i) => <Tool key={i} {...t} />)}
      </ToolRow>

      <Main>
        <LeftPanel>
          <LeftHeader />
          <CommandArea>
            <CommandInput>Command</CommandInput>
            <Palette>
              {leftIcons.map((t, i) => <Tool key={i} {...t} />)}
            </Palette>
          </CommandArea>
          <SnapList>
            <RadioGroup>
              <RadioRow><Radio $on /><span>Persistent</span></RadioRow>
              <RadioRow><Radio /><span>One shot</span></RadioRow>
            </RadioGroup>
            {snaps.map(([name, state]) => (
              <CheckRow key={name} $off={state === 'off'}>
                <Check $off={state === 'off'} $on={state === 'on'}>{state === 'on' ? <Tick /> : null}</Check>
                <span>{name}</span>
              </CheckRow>
            ))}
            <CheckRow $gap={36}><Check /><span>Disable all</span></CheckRow>
          </SnapList>
        </LeftPanel>

        <Center>
          <ViewTabs>
            <ViewIcon viewBox="0 0 31 28" $mr={33}>
              <path d="M1 1h29v26H1zM15.5 1v26M1 14h29" fill="#f4f4f4" stroke="#8a8a8a" strokeWidth="1.6" />
              <path d="M2 2h9M17 2h9M2 15h9M17 15h9" stroke="#666" strokeWidth="2" />
            </ViewIcon>
            <ViewIcon viewBox="0 0 31 28" $mr={28}>
              <rect x="1" y="1" width="29" height="26" fill="#f4f6fb" stroke="#6f9df2" strokeWidth="1.6" />
              <path d="M1 2h7" stroke="#2f74ea" strokeWidth="3" />
            </ViewIcon>
            <ViewSep />
            <ViewTab $w={219}>Perspective</ViewTab>
            <ViewSep />
            <ViewTab $w={122} $active>Top</ViewTab>
            <ViewSep />
            <ViewTab $w={142}>Front</ViewTab>
            <ViewSep />
            <ViewTab $w={140}>Right</ViewTab>
            <ViewSep />
            <ViewTab $w={196}>Layouts...</ViewTab>
          </ViewTabs>
          <Viewport>
            <Canvas viewBox="0 0 1958 1512">
              <path d={minorPath()} fill="none" stroke="#83888b" strokeWidth="0.8" opacity="0.5" />
              <path d={majorPath()} fill="none" stroke="#7d8283" strokeWidth="1.2" />
              <path d={`M${GX + 20 * CELL} ${GY}V${GY + 20 * CELL}`} stroke="#4f9a4a" strokeWidth="2" />
              <path d={`M${GX + 20 * CELL} ${GY + 20 * CELL}H${GX + GW}`} stroke="#a04a50" strokeWidth="2" />
              {shapes.map(s => (
                <path key={`${s.x}-${s.y}`} d={panelShape} transform={`translate(${s.x} ${s.y})`} fill="none" stroke="#1b1e22" strokeWidth="1.3" />
              ))}
              <path d="M72.5 1380V1440H132" fill="none" stroke="#666" strokeWidth="1.4" />
              <text x="76" y="1379" fontFamily="Inter, sans-serif" fontSize="28" fill="#666">y</text>
              <text x="137" y="1444" fontFamily="Inter, sans-serif" fontSize="28" fill="#666">x</text>
            </Canvas>
            <ViewLabel>Top</ViewLabel>
          </Viewport>
        </Center>

        <RightColumn>
          <Properties h={801} line />
          <Properties h={763} />
        </RightColumn>
      </Main>

      <StatusBar>
        <StatusText>
          <svg width="25" height="18" viewBox="0 0 25 18">
            <path d="M0 2h3M0 9h3M0 16h3M7 2h18M7 9h18M7 16h18" stroke="#555" strokeWidth="1.6" />
          </svg>
          <span>30 curves added to selection.</span>
        </StatusText>
        <StatusCell $w={147}>Millimeters</StatusCell>
        <PlaneSelect>
          <span>CPlane</span>
          <UpDown color="#999" />
        </PlaneSelect>
        <StatusCell $w={164}>X: -195.310</StatusCell>
        <StatusCell $w={171}>Y: 65.199</StatusCell>
        <StatusCell $w={120}>Z: 0.000</StatusCell>
      </StatusBar>
    </Page>
  );
}
